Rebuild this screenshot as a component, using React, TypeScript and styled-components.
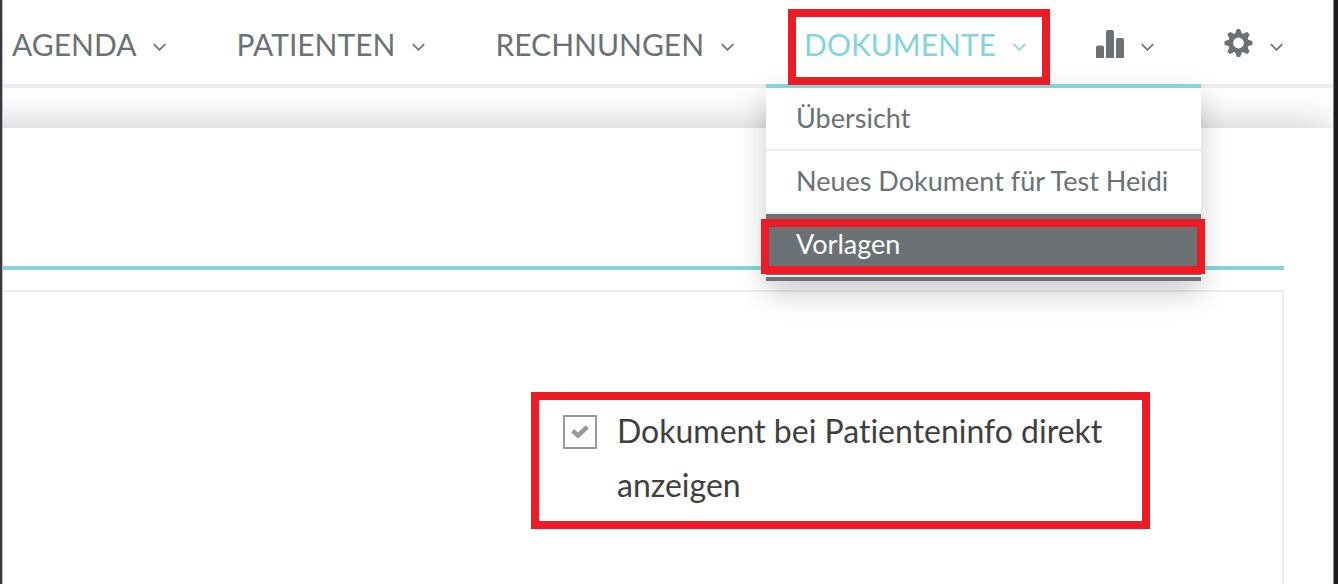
import React, { useState } from "react";
import styled, { createGlobalStyle, css } from "styled-components";

const teal = "#85d4dc";
const slate = "#6b7175";
const line = "#ededed";
const red = "#ed1c24";

const GlobalStyle = createGlobalStyle`
  *, *::before, *::after { box-sizing: border-box; }
  body {
    margin: 0;
    background: #fff;
    font-family: Lato, "Noto Sans", sans-serif;
    font-variant-ligatures: none;
  }
`;

const Window = styled.div`
  display: flex;
  min-height: 100vh;
  border-left: 2px solid #3a3540;
  border-right: 4px solid #231a1e;
  box-shadow: inset 1px 0 #b9b8bc, inset -1px 0 #8a8588;
  padding: 0 1px;
`;

const Page = styled.div`
  flex: 1;
  display: flex;
  flex-direction: column;
  min-width: 0;
  overflow: hidden;
`;

const Header = styled.header`
  position: relative;
  z-index: 2;
  height: 88px;
  background: #fff;
  border-bottom: 4px solid ${line};
`;

const Nav = styled.nav`
  display: flex;
  justify-content: flex-end;
  align-items: center;
  gap: 70px;
  height: 84px;
  padding: 0 50px 0 9px;
`;

const NavItem = styled.div`
  position: relative;
  display: flex;
  align-items: center;
  height: 84px;
`;

const NavButton = styled.button<{ $active?: boolean }>`
  display: flex;
  align-items: center;
  gap: 17px;
  padding: 4px 0 0;
  border: 0;
  background: none;
  font: inherit;
  font-size: 30px;
  line-height: 40px;
  white-space: nowrap;
  color: ${(p) => (p.$active ? teal : slate)};
  cursor: pointer;

  > svg:last-child { margin-top: 6px; }
`;

const Mark = styled.span`
  position: absolute;
  inset: 9px -24px -1px auto;
  width: 262px;
  border: 8px solid ${red};
  pointer-events: none;
`;

const Menu = styled.ul`
  position: absolute;
  top: 84px;
  right: -175px;
  width: 435px;
  margin: 0;
  padding: 0;
  list-style: none;
  background: #fff;
  border-top: 4px solid ${teal};
  border-bottom: 4px solid ${slate};
  box-shadow: 0 12px 28px rgba(0, 0, 0, 0.2);
`;

const MenuItem = styled.li`
  position: relative;
  border-bottom: 2px solid ${line};
`;

const MenuLink = styled.a<{ $selected?: boolean }>`
  display: block;
  padding: 0 30px 2px;
  font-size: 27px;
  line-height: 59px;
  white-space: nowrap;
  text-decoration: none;
  color: ${(p) => (p.$selected ? "#fff" : slate)};
  ${(p) => p.$selected && css`background: ${slate};`}
`;

const MenuMark = styled(Mark)`
  inset: 5px -4px 1px -5px;
  width: auto;
`;

/* Runs past the left edge so that its shadow does not fade out there. */
const Content = styled.main`
  flex: 1;
  display: flex;
  flex-direction: column;
  margin: 40px 0 0 -40px;
  padding-right: 49px;
  background: #fff;
  box-shadow: 0 0 40px rgba(0, 0, 0, 0.23);
`;

const TitleBar = styled.div`
  height: 142px;
  border-bottom: 4px solid ${teal};
`;

const Panel = styled.section`
  flex: 1;
  display: flex;
  justify-content: flex-end;
  align-items: flex-start;
  margin-top: 20px;
  padding: 100px 132px 55px 0;
  border-top: 2px solid ${line};
  border-right: 2px solid ${line};
`;

const Option = styled.label`
  display: flex;
  align-items: flex-start;
  gap: 20px;
  width: 619px;
  padding: 4px 24px 9px;
  border: 8px solid ${red};
  font-size: 32px;
  line-height: 54px;
  color: #3f3f3f;
`;

const CheckWrap = styled.span`
  display: grid;
  flex: none;
  margin-top: 11px;
  > * { grid-area: 1 / 1; place-self: center; }
`;

const CheckInput = styled.input`
  appearance: none;
  width: 34px;
  height: 34px;
  margin: 0;
  border: 2px solid #999;
  background: #fff;
  &:not(:checked) + svg { visibility: hidden; }
`;

const Chevron = () => (
  <svg width="13" height="9" viewBox="0 0 13 9" fill="none" stroke="currentColor" strokeWidth="1.7" aria-hidden="true">
    <path d="M.8 1.2 6.5 6.9l5.7-5.7" />
  </svg>
);

const BarsIcon = () => (
  <svg width="28" height="28" viewBox="0 0 28 28" fill="currentColor" aria-hidden="true">
    <path d="M0 28V17.500q0-2 2-2h4q2 0 2 2V28zM10 28V2q0-2 2-2h4q2 0 2 2v26zM20 28V10q0-2 2-2h4q2 0 2 2v18z" />
  </svg>
);

const teeth = [0, 45, 90, 135, 180, 225, 270, 315];

const GearIcon = () => (
  <svg width="29" height="30" viewBox="0 0 29 30" aria-hidden="true">
    <g fill="currentColor">
      {teeth.map((a) => (
        <path key={a} d="M10.700 6 12.600.400Q12.800 0 13.300 0h2.400q.5 0 .7.400L18.300 6z" transform={`rotate(${a} 14.500 14)`} />
      ))}
    </g>
    <circle cx="14.5" cy="14" r="7.8" fill="none" stroke="currentColor" strokeWidth="4.800" />
  </svg>
);

const CheckIcon = () => (
  <svg width="18" height="14" viewBox="0 0 18 14" fill="none" stroke="#999" strokeWidth="4.6" strokeLinejoin="round" aria-hidden="true">
    <path d="M1.800 5.600 7 10.600 16.200 1.800" />
  </svg>
);

const mainItems = ["AGENDA", "PATIENTEN", "RECHNUNGEN"];

export default function App() {
  const [direct, setDirect] = useState(true);
  return (
    <>
      <GlobalStyle />
      <Window>
        <Page>
          <Header>
            <Nav>
              {mainItems.map((label) => (
                <NavItem key={label}>
                  <NavButton>{label}<Chevron /></NavButton>
                </NavItem>
              ))}
              <NavItem>
                <NavButton $active aria-expanded="true">DOKUMENTE<Chevron /></NavButton>
                <Menu>
                  <MenuItem><MenuLink href="#uebersicht">Übersicht</MenuLink></MenuItem>
                  <MenuItem><MenuLink href="#neu">Neues Dokument für Test Heidi</MenuLink></MenuItem>
                  <MenuItem>
                    <MenuLink href="#vorlagen" $selected>Vorlagen</MenuLink>
                    <MenuMark />
                  </MenuItem>
                </Menu>
                <Mark />
              </NavItem>
              <NavItem>
                <NavButton aria-label="Statistik"><BarsIcon /><Chevron /></NavButton>
              </NavItem>
              <NavItem>
                <NavButton aria-label="Einstellungen"><GearIcon /><Chevron /></NavButton>
              </NavItem>
            </Nav>
          </Header>
          <Content>
            <TitleBar />
            <Panel>
              <Option>
                <CheckWrap>
                  <CheckInput type="checkbox" checked={direct} onChange={(e) => setDirect(e.target.checked)} />
                  <CheckIcon />
                </CheckWrap>
                <span>Dokument bei Patienteninfo direkt anzeigen</span>
              </Option>
            </Panel>
          </Content>
        </Page>
      </Window>
    </>
  );
}
